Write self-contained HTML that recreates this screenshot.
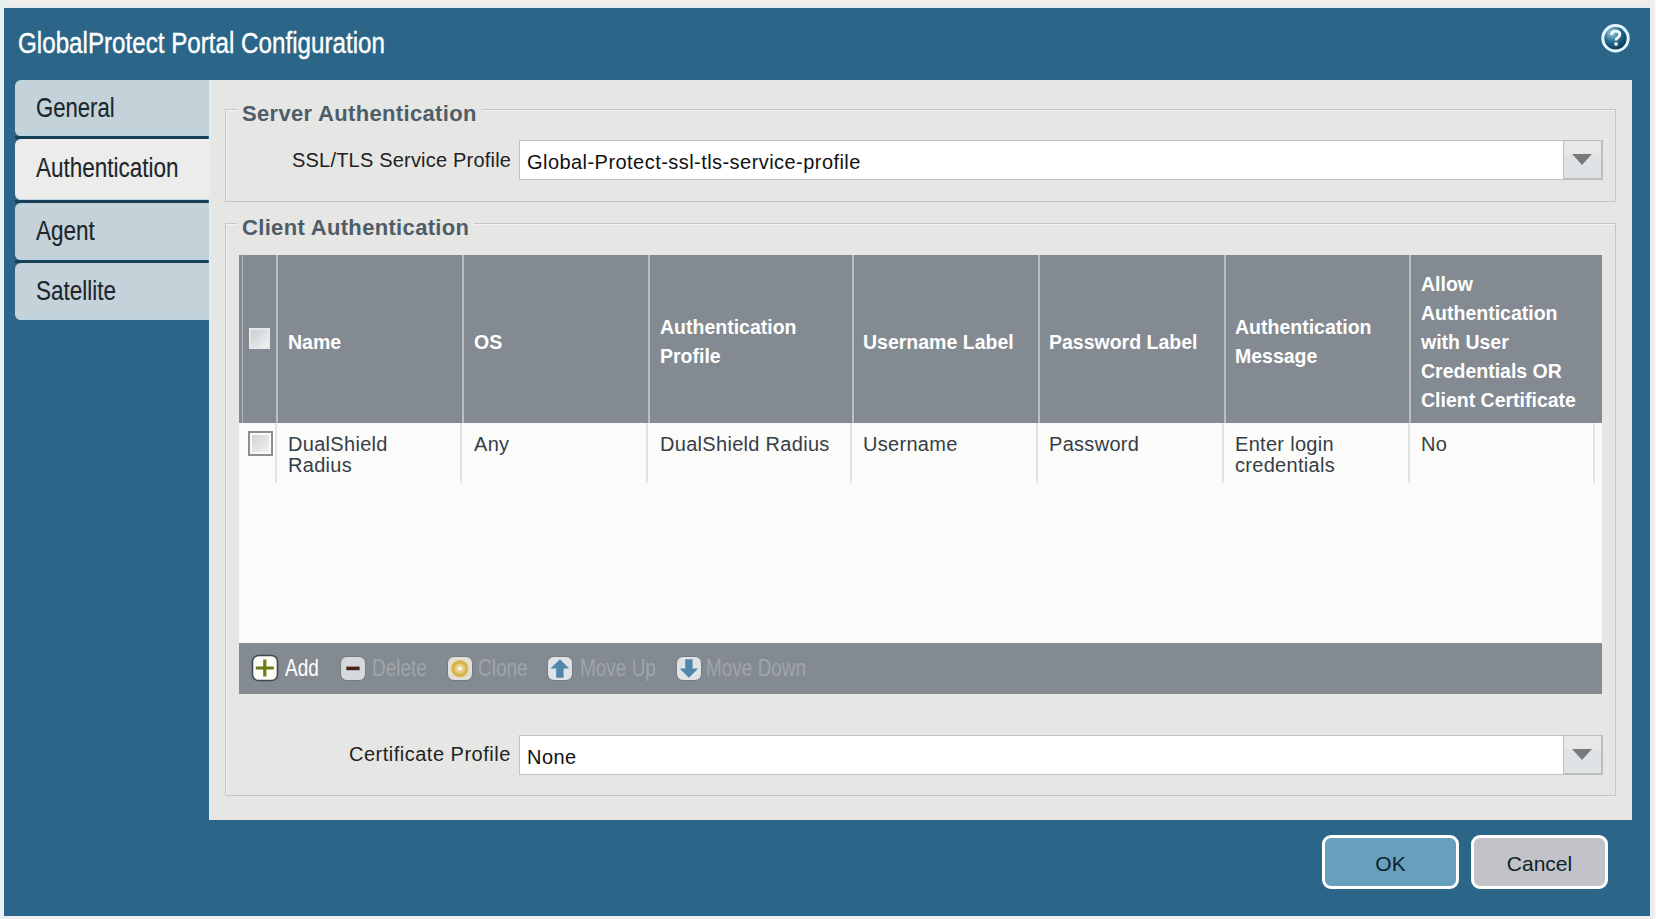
<!DOCTYPE html>
<html>
<head>
<meta charset="utf-8">
<style>
html,body{margin:0;padding:0;}
body{width:1656px;height:919px;position:relative;overflow:hidden;background:#eeedeb;font-family:"Liberation Sans",sans-serif;}
.abs{position:absolute;}
#edge{left:0;top:0;width:3px;height:919px;background:#e6eff4;}
#edgeR{left:1650px;top:7px;width:1px;height:910px;background:#e4f1f8;}
#edgeB{left:3px;top:916px;width:1648px;height:1px;background:#e4f1f8;}
#edgeRR{left:1655px;top:0;width:1px;height:919px;background:#fbfbfb;}
#edgeT{left:3px;top:7px;width:1648px;height:1px;background:#dcebf3;}
#dlg{left:4px;top:8px;width:1646px;height:908px;background:#2b6688;}
#title{left:18px;top:26px;font-size:30px;color:#fff;white-space:nowrap;transform-origin:0 0;transform:scaleX(0.806);-webkit-text-stroke:0.4px #fff;}
#help{left:1601px;top:24px;width:23px;height:23px;border-radius:50%;border:2.5px solid #e8f8ff;background:radial-gradient(circle at 35% 30%,#8fc3dd 0%,#2b6e93 45%,#0b3a58 100%);}
#help span{position:absolute;left:0;top:0;width:23px;height:23px;text-align:center;line-height:23px;font-weight:bold;font-size:19px;color:#fff;}
.tab{left:15px;width:194px;background:#c4d3da;border-radius:6px 0 0 6px;box-shadow:inset 0 -1px 0 #bad5e3;}
.tab span{position:absolute;left:21px;font-size:27.5px;color:#1c262c;white-space:nowrap;transform-origin:0 0;transform:scaleX(0.818);-webkit-text-stroke:0.15px #1c262c;}
.tdiv{left:15px;width:193px;height:3px;background:#173f58;}
#panel{left:209px;top:80px;width:1423px;height:740px;background:#e6e6e4;box-shadow:inset 2px 0 0 #e4e9ec;}
.fs{border:1px solid #c6c6c4;box-shadow:inset 1px 1px 0 #f2f2f0;}
.legend{font-weight:bold;font-size:22px;color:#4f5d68;letter-spacing:0.33px;background:#e6e6e4;padding:0 5px;white-space:nowrap;}
.lbl{font-size:20px;color:#222;white-space:nowrap;letter-spacing:0.2px;}
.inp{background:#fff;border:1px solid #c3c3c3;}
.inp span{position:absolute;left:7px;font-size:20px;color:#111;white-space:nowrap;letter-spacing:0.45px;margin-top:1px;}
.dd{background:linear-gradient(#e9e8e7 0%,#e9e8e7 33%,#e0e3e6 40%,#e0e3e6 100%);border:1px solid #bdbdbd;border-width:1px 2px 2px 1px;width:37px!important;height:37px!important;}
.dd i{position:absolute;left:8px;top:13px;width:0;height:0;border-left:10px solid transparent;border-right:10px solid transparent;border-top:11px solid #7a7a7a;}
#thead{left:239px;top:255px;width:1363px;height:168px;background:#838a91;}
.vh{top:255px;width:2px;height:168px;background:#b9bfc4;}
.vb{top:423px;width:2px;height:60px;background:#e4e4e4;}
.hd{font-weight:bold;font-size:19.5px;color:#fff;line-height:29px;white-space:nowrap;margin-top:1.5px;}
.bd{font-size:20px;color:#353e46;line-height:21px;white-space:nowrap;letter-spacing:0.3px;margin-top:2px;}
#tbody{left:239px;top:423px;width:1363px;height:220px;background:#fbfbfa;}
#tbar{left:239px;top:643px;width:1363px;height:51px;background:#838a91;}
.cb{width:18px;height:18px;border:1px solid #8d8d8d;background:linear-gradient(#f4f4f4,#dcdcdc);}
.tic{top:655px;width:25px;height:25px;border-radius:6px;}
.tt{top:654px;font-size:24px;white-space:nowrap;transform-origin:0 0;transform:scaleX(0.79);color:#9fa5aa;}
.btn{top:835px;width:131px;height:48px;border:3px solid #fff;border-radius:9px;}
.btn span{position:absolute;left:0;width:100%;top:14px;text-align:center;font-size:21px;color:#0e1e2a;}
</style>
</head>
<body>
<div class="abs" id="edge"></div>
<div class="abs" id="edgeT"></div>
<div class="abs" id="edgeR"></div>
<div class="abs" id="edgeB"></div>
<div class="abs" id="edgeRR"></div>
<div class="abs" id="dlg"></div>
<div class="abs" id="title">GlobalProtect Portal Configuration</div>
<svg class="abs" style="left:1600px;top:23px" width="31" height="31" viewBox="0 0 31 31"><defs><radialGradient id="hg" cx="35%" cy="28%" r="75%"><stop offset="0" stop-color="#9fd0e6"/><stop offset="0.45" stop-color="#2c6f94"/><stop offset="1" stop-color="#06304b"/></radialGradient></defs><circle cx="15.5" cy="15.3" r="12.7" fill="url(#hg)" stroke="#e2f7ff" stroke-width="3"/><path d="M11.6 11.8C11.8 9.2 13.4 8.1 15.7 8.1C18.3 8.1 19.8 9.6 19.8 11.5C19.8 13.6 18.1 14.4 17.1 15.2C16.3 15.8 16.1 16.4 16.1 17.6" fill="none" stroke="#f4fbff" stroke-width="2.8"/><rect x="14.5" y="19.4" width="3.2" height="3.2" fill="#f4fbff"/></svg>

<!-- tabs -->
<div class="abs tab" style="top:80px;height:56px;"><span style="top:12px;transform:scaleX(0.804);">General</span></div>
<div class="abs tdiv" style="top:136px;"></div>
<div class="abs tab" style="top:139px;height:61px;background:#ececeb;"><span style="top:13px;">Authentication</span></div>
<div class="abs tdiv" style="top:200px;"></div>
<div class="abs tab" style="top:203px;height:57px;"><span style="top:12px;">Agent</span></div>
<div class="abs tdiv" style="top:260px;"></div>
<div class="abs tab" style="top:263px;height:57px;"><span style="top:12px;">Satellite</span></div>

<div class="abs" id="panel"></div>

<!-- server auth fieldset -->
<div class="abs fs" style="left:225px;top:109px;width:1389px;height:91px;"></div>
<div class="abs legend" style="left:237px;top:101px;">Server Authentication</div>
<div class="abs lbl" style="left:292px;top:149px;">SSL/TLS Service Profile</div>
<div class="abs inp" style="left:519px;top:140px;width:1044px;height:38px;"><span style="top:9px;">Global-Protect-ssl-tls-service-profile</span></div>
<div class="abs dd" style="left:1563px;top:140px;width:38px;height:38px;"><i></i></div>

<!-- client auth fieldset -->
<div class="abs fs" style="left:225px;top:223px;width:1389px;height:571px;"></div>
<div class="abs legend" style="left:237px;top:215px;">Client Authentication</div>

<div class="abs" id="thead"></div>
<div class="abs" id="tbody"></div>
<div class="abs" id="tbar"></div>
<div class="abs" style="left:242px;top:255px;width:1px;height:168px;background:#aeb4b9;"></div>
<div class="abs vh" style="left:276px;"></div>
<div class="abs vh" style="left:462px;"></div>
<div class="abs vh" style="left:648px;"></div>
<div class="abs vh" style="left:852px;"></div>
<div class="abs vh" style="left:1038px;"></div>
<div class="abs vh" style="left:1224px;"></div>
<div class="abs vh" style="left:1409px;"></div>
<div class="abs vb" style="left:275px;"></div>
<div class="abs vb" style="left:460px;"></div>
<div class="abs vb" style="left:646px;"></div>
<div class="abs vb" style="left:850px;"></div>
<div class="abs vb" style="left:1036px;"></div>
<div class="abs vb" style="left:1222px;"></div>
<div class="abs vb" style="left:1408px;"></div>
<div class="abs vb" style="left:1593px;"></div>

<div class="abs" style="left:249px;top:328px;width:17px;height:17px;border:2px solid #e6e8ea;background:linear-gradient(135deg,#c9cdd1,#f1f1f1);"></div>
<div class="abs hd" style="left:288px;top:326px;">Name</div>
<div class="abs hd" style="left:474px;top:326px;">OS</div>
<div class="abs hd" style="left:660px;top:311px;">Authentication<br>Profile</div>
<div class="abs hd" style="left:863px;top:326px;">Username Label</div>
<div class="abs hd" style="left:1049px;top:326px;">Password Label</div>
<div class="abs hd" style="left:1235px;top:311px;">Authentication<br>Message</div>
<div class="abs hd" style="left:1421px;top:268px;">Allow<br>Authentication<br>with User<br>Credentials OR<br>Client Certificate</div>

<div class="abs" style="left:248px;top:431px;width:21px;height:21px;border:2px solid #8e8e8e;box-shadow:inset 0 0 0 2px #fafafa;background:linear-gradient(135deg,#cfd0d1,#f4f4f4);"></div>
<div class="abs bd" style="left:288px;top:432px;">DualShield<br>Radius</div>
<div class="abs bd" style="left:474px;top:432px;">Any</div>
<div class="abs bd" style="left:660px;top:432px;">DualShield Radius</div>
<div class="abs bd" style="left:863px;top:432px;">Username</div>
<div class="abs bd" style="left:1049px;top:432px;">Password</div>
<div class="abs bd" style="left:1235px;top:432px;">Enter login<br>credentials</div>
<div class="abs bd" style="left:1421px;top:432px;">No</div>

<!-- toolbar -->
<svg class="abs" style="left:251px;top:654px" width="28" height="28" viewBox="0 0 28 28"><rect x="1.5" y="1.5" width="25" height="25" rx="6" fill="#fdfdf8" stroke="#3f4850" stroke-width="1.6"/><path d="M4.8 14H22.8M13.8 5.5V22.5" stroke="#6c7b16" stroke-width="3.2"/></svg>
<div class="abs tt" style="left:285px;color:#fff;">Add</div>
<svg class="abs" style="left:339px;top:655px" width="28" height="27" viewBox="0 0 28 27"><rect x="1.5" y="1.5" width="25" height="24" rx="6.5" fill="#d5d9dc" stroke="#737a81" stroke-width="1"/><path d="M7.3 13.4H20.6" stroke="#4d2019" stroke-width="3.6"/></svg>
<div class="abs tt" style="left:372px;">Delete</div>
<svg class="abs" style="left:446px;top:655px" width="28" height="27" viewBox="0 0 28 27"><rect x="1.5" y="1.5" width="25" height="24" rx="6.5" fill="#e2e0d6" stroke="#737a81" stroke-width="1"/><circle cx="13.8" cy="13.6" r="8.6" fill="#d8b548"/><circle cx="13.8" cy="13.6" r="5.2" fill="#e6cf7e"/><path d="M13.8 10.6L16.8 13.6L13.8 16.6L10.8 13.6Z" fill="#f4f0e4"/></svg>
<div class="abs tt" style="left:478px;">Clone</div>
<svg class="abs" style="left:546px;top:655px" width="28" height="27" viewBox="0 0 28 27"><rect x="1.5" y="1.5" width="25" height="24" rx="6.5" fill="#dfe3e6" stroke="#737a81" stroke-width="1"/><path d="M13.9 4.2L23.2 13.6H17.6V22.8H10.2V13.6H4.6Z" fill="#4f88ac"/></svg>
<div class="abs tt" style="left:580px;">Move Up</div>
<svg class="abs" style="left:675px;top:655px" width="28" height="27" viewBox="0 0 28 27"><rect x="1.5" y="1.5" width="25" height="24" rx="6.5" fill="#dfe3e6" stroke="#737a81" stroke-width="1"/><path d="M13.9 22.8L23.2 13.4H17.6V4.2H10.2V13.4H4.6Z" fill="#4f88ac"/></svg>
<div class="abs tt" style="left:706px;">Move Down</div>

<!-- cert profile -->
<div class="abs lbl" style="left:349px;top:743px;letter-spacing:0.5px;">Certificate Profile</div>
<div class="abs inp" style="left:519px;top:735px;width:1044px;height:38px;"><span style="top:9px;">None</span></div>
<div class="abs dd" style="left:1563px;top:735px;width:38px;height:38px;"><i></i></div>

<!-- buttons -->
<div class="abs btn" style="left:1322px;background:#689fbc;"><span>OK</span></div>
<div class="abs btn" style="left:1471px;background:#c1c3c8;"><span>Cancel</span></div>
</body>
</html>
